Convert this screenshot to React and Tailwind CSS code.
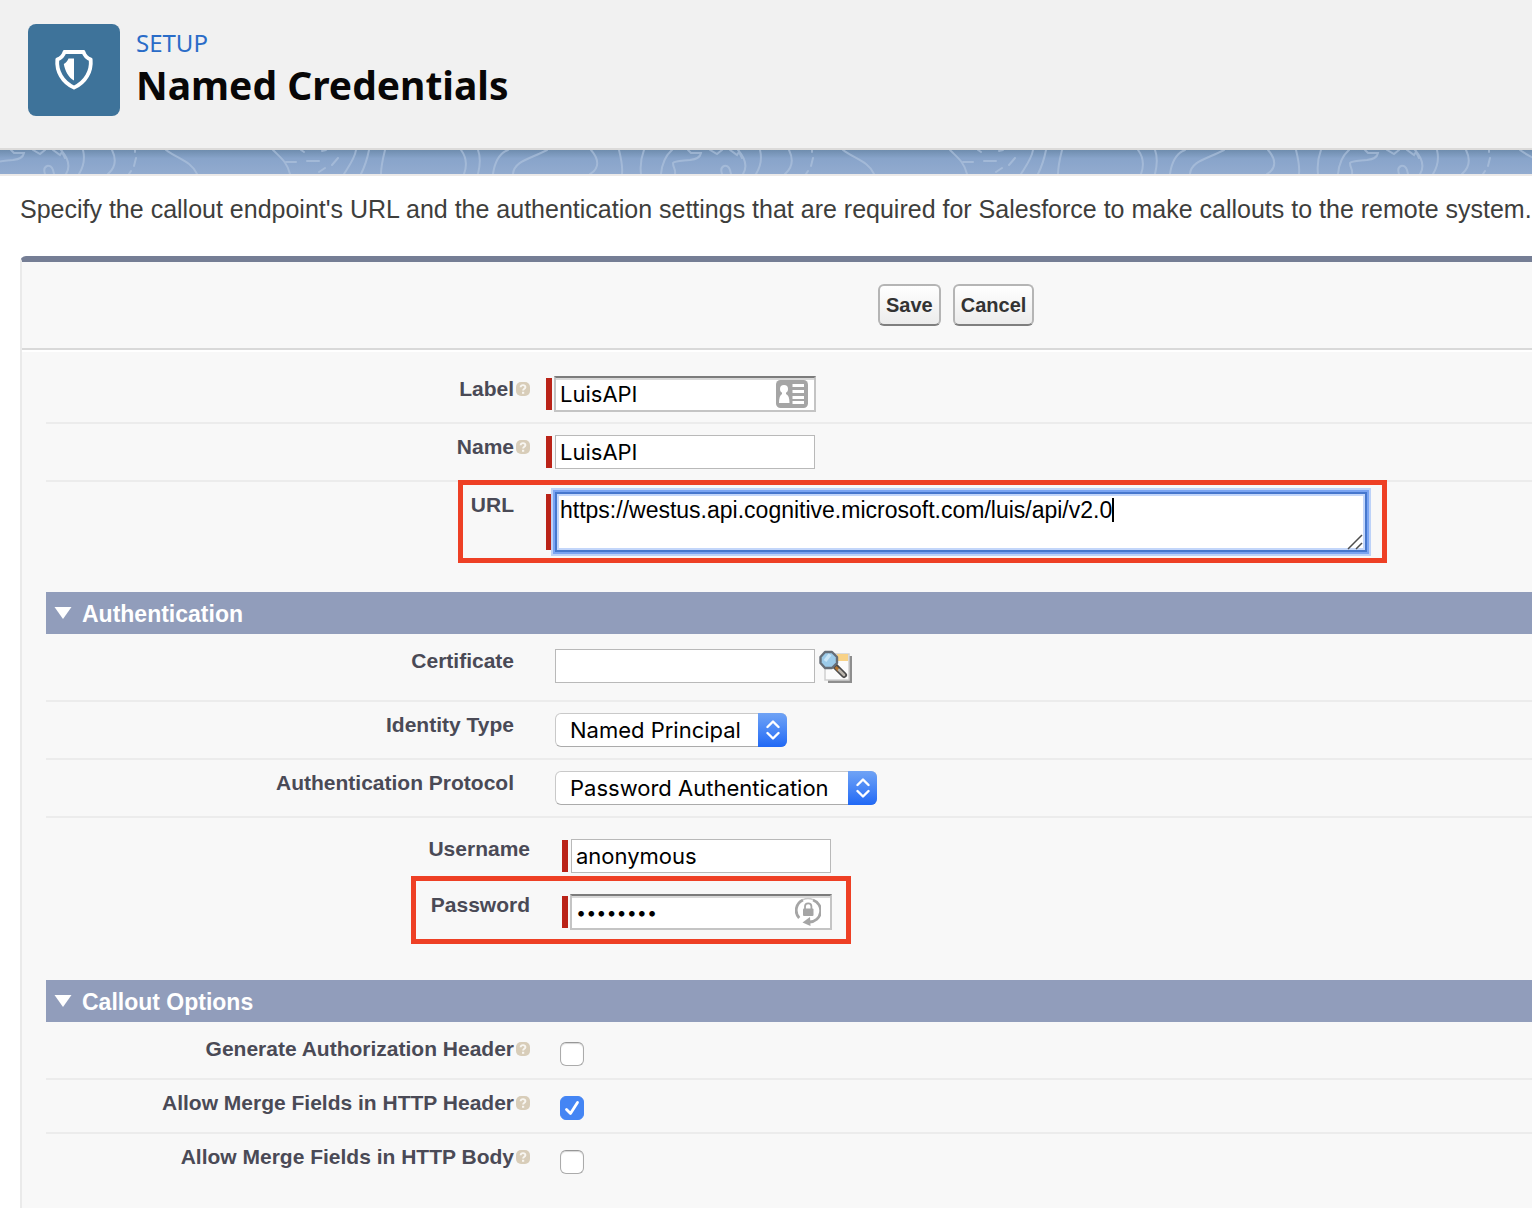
import React, { useState } from "react";

const SANS = "font-['Liberation_Sans',Arial,sans-serif]";
const UI = "font-['Inter','Liberation_Sans',sans-serif]";

function ShieldIcon() {
  return (
    <svg viewBox="0 0 40 42" className="h-[42px] w-10" aria-hidden="true">
      <path
        d="M10.5 3H29.5C30.5 6.500 33 9 36.700 10.600C37.700 22 32 33 20 38.600C8 33 2.300 22 3.300 10.600C7 9 9.500 6.500 10.500 3Z"
        fill="none"
        stroke="#fff"
        strokeWidth="3.8"
        strokeLinejoin="round"
      />
      <path d="M20 9.500H14.500C13.500 12 12 13.700 9.800 15C11 22 14.500 28.500 20 31.500Z" fill="#fff" />
    </svg>
  );
}

const CONTOURS = [
  "M-7 24C-5 10 0 3 8 0",
  "M13 24C14 11 30 9 47 0",
  "M91 0C99 9 100 18 90 24",
  "M119 0C121 8 123 16 122 24",
  "M144 0C141 8 140 16 141 24",
  "M172 0C165 6 162 14 161 24",
  "M188 0L191 3L201 3C200 8 196 9 190 10C180 11 174 11 173 13C173 18 176 19 175 24",
  "M210 0L217 4L222 0",
  "M230 0L237 5L239 2L242 8",
  "M238 0C245 8 248 16 243 24",
  "M222 24C219 15 228 13 230 20L231 24",
  "M260 0C262 8 261 16 256 24",
  "M289 0C293 8 293 17 285 24",
  "M312 0V2M313 8L311 16M308 21L306 24",
  "M343 0C355 9 368 11 374 24",
  "M450 0C458 8 464 12 467 24",
  "M463 12H473M484 11H496M509 15L515 8M496 22L502 18M478 0L481 2M499 1L503 0",
  "M533 0C532 8 526 16 521 24",
  "M546 0C544 10 542 16 538 24",
  "M562 0C560 8 558 16 558 24",
  "M638 0C644 8 644 16 641 24",
  "M655 0C658 8 657 16 655 24",
];

function ContourBand() {
  return (
    <div className="h-6 overflow-hidden bg-linear-to-b from-[#6f8dae] via-[#88a4ca] via-35% to-[#92abcf]">
      <svg width="3200" height="24" className="block max-w-none" aria-hidden="true">
        <g fill="none" stroke="#b4c7e0" strokeWidth="2" strokeLinecap="round" opacity="0.6">
          {[-177, 500, 1177, 1854, 2531].map((x) => (
            <g key={x} transform={`translate(${x} 0)`}>
              {CONTOURS.map((d) => (
                <path key={d} d={d} />
              ))}
            </g>
          ))}
        </g>
      </svg>
    </div>
  );
}

function HelpIcon() {
  return (
    <svg viewBox="0 0 14 14" className="h-3.5 w-3.5" aria-hidden="true">
      <rect width="14" height="14" rx="5" fill="#d8cdb9" />
      <path d="M4.600 5.200C4.800 2.400 9.600 2.500 9.400 5.200C9.300 6.700 7.200 6.800 7.100 8.500" fill="none" stroke="#f8f6f1" strokeWidth="1.900" />
      <rect x="6" y="9.800" width="2.200" height="2" fill="#f8f6f1" />
    </svg>
  );
}

function ContactCardIcon() {
  return (
    <svg viewBox="0 0 32 28" className="h-7 w-8" aria-hidden="true">
      <rect width="32" height="28" rx="4.500" fill="#a5a5a5" />
      <circle cx="8" cy="9" r="4" fill="#fff" />
      <path d="M6 11H10V14C12.500 15 13.500 18 13.500 23H3C3 18 4 15 6 14Z" fill="#fff" />
      <path d="M16.500 5.500H28M16.500 11.500H28M16.500 17.500H28M16.500 22.500H28" stroke="#fff" strokeWidth="2.800" />
    </svg>
  );
}

function LockCycleIcon() {
  return (
    <svg viewBox="0 0 26 30" className="h-[30px] w-[26px]" aria-hidden="true">
      <path d="M4.200 21A11.300 11.300 0 0 1 8 3M18 3A11.300 11.300 0 0 1 14.500 25" fill="none" stroke="#a5a5a5" strokeWidth="2.800" />
      <path d="M8 2.600C11 1.300 15 1.300 18 2.600" fill="none" stroke="#c8c8c8" strokeWidth="1.500" />
      <path d="M15 20L15.500 29L7.500 25.500Z" fill="#a5a5a5" />
      <rect x="8" y="11.500" width="10.500" height="7.500" rx="1" fill="#a5a5a5" />
      <path d="M10 12V9.500A3.200 3.200 0 0 1 16.400 9.500V12" fill="none" stroke="#a5a5a5" strokeWidth="1.800" />
    </svg>
  );
}

function LookupIcon() {
  return (
    <svg viewBox="0 0 34 34" className="h-[34px] w-[34px]" aria-hidden="true">
      <path d="M9 6H33V33H9Z" fill="#8e8e8e" />
      <path d="M6 4H30V30H6Z" fill="#fbfbfb" stroke="#cfcfcf" strokeWidth="1.500" />
      <rect x="18" y="4" width="11" height="7" fill="#f8d287" />
      <path d="M16 16L25 25" stroke="#4a4a4a" strokeWidth="6" strokeLinecap="round" />
      <path d="M16.500 17L20 20.500" stroke="#b5742e" strokeWidth="3" />
      <path d="M20 20L25 25" stroke="#b9b4ac" strokeWidth="2.600" strokeLinecap="round" />
      <path d="M6 2H13L18 7V13L13 18H6L1.500 13V7Z" fill="#9ccbea" stroke="#666e78" strokeWidth="2.400" strokeLinejoin="round" />
      <path d="M6 11L11 4.500" stroke="#c9e5f7" strokeWidth="3.500" />
    </svg>
  );
}

function Label({ htmlFor, help, nested, children }) {
  return (
    <div className="flex w-[484px] shrink-0 items-center justify-end gap-0.5">
      <label
        htmlFor={htmlFor}
        className={
          nested
            ? "text-[21px] leading-[22px] font-bold whitespace-nowrap text-[#4a4a56]"
            : "text-[21px] leading-[26px] font-bold whitespace-nowrap text-[#4a4a56]"
        }
      >
        {children}
      </label>
      <span className="flex w-3.5">{help && <HelpIcon />}</span>
    </div>
  );
}

function Required() {
  return <span className="h-8 w-1.5 bg-[#ba2318]" />;
}

function TextInput({ id, type = "text", value, inset, icon }) {
  const [text, setText] = useState(value);
  const size = type === "password" ? "text-lg" : "text-[22px]";
  return (
    <div className="relative flex h-9 w-[262px] items-center justify-center">
      <input
        id={id}
        type={type}
        value={text}
        onChange={(e) => setText(e.target.value)}
        className={
          inset
            ? `${UI} ${size} h-9 w-[262px] border-2 border-[#c4c4c4] border-t-[#7c7c7c] bg-white pl-1 text-black shadow-[inset_0_2px_0_#d9d9d9] outline-none`
            : `${UI} ${size} h-[34px] w-[260px] border border-[#b9b9b9] bg-white pl-1 text-black outline-none`
        }
      />
      {icon}
    </div>
  );
}

function Select({ id, label, className }) {
  return (
    <div className={`relative mx-px h-[34px] ${className}`}>
      <select
        id={id}
        className={`${UI} h-full w-full appearance-none rounded-md border border-[#c9c9c9] border-b-[#ababab] bg-white pl-3.5 text-[22px] text-black outline-none`}
      >
        <option>{label}</option>
      </select>
      <span className="pointer-events-none absolute inset-y-0 right-0 flex w-[29px] items-center justify-center rounded-r-md bg-linear-to-b from-[#70a3f5] to-[#2068f5]">
        <svg viewBox="0 0 14 20" className="h-5 w-3.5" fill="none" stroke="#fff" strokeWidth="2.400" strokeLinecap="round" strokeLinejoin="round" aria-hidden="true">
          <path d="M1.500 7L7 1.500L12.500 7M1.500 13L7 18.500L12.500 13" />
        </svg>
      </span>
    </div>
  );
}

function Row({ className = "pt-2.5 pb-2.5", last, children }) {
  return (
    <div className={`flex items-start gap-4 ${last ? "" : "border-b-2 border-[#ececec]"} ${className}`}>
      {children}
    </div>
  );
}

function SectionHeading({ children }) {
  return (
    <h2 className="flex h-[42px] items-center gap-2.5 bg-[#919dbb] pl-2 text-[23px] font-bold text-white">
      <svg viewBox="0 0 18 14" className="h-3.5 w-[18px]" aria-hidden="true">
        <path d="M0.500 1H17.500L9 13Z" fill="#fff" />
      </svg>
      <span className="pt-0.5 leading-7">{children}</span>
    </h2>
  );
}

function CheckRow({ id, label, defaultChecked, className, last }) {
  return (
    <Row className={className} last={last}>
      <Label htmlFor={id} help>{label}</Label>
      <span className="relative mt-1.5 ml-3.5 h-6 w-6">
        <input
          id={id}
          type="checkbox"
          defaultChecked={defaultChecked}
          className="peer block h-6 w-6 appearance-none rounded-md border border-[#ababab] border-t-[#979797] bg-white shadow-[inset_0_1px_1px_#d6d6d6] checked:border-[#4485f4] checked:bg-[#4485f4] checked:shadow-none"
        />
        <svg viewBox="0 0 24 24" className="pointer-events-none absolute inset-0 hidden h-6 w-6 peer-checked:block" fill="none" stroke="#fff" strokeWidth="2.800" strokeLinecap="round" strokeLinejoin="round" aria-hidden="true">
          <path d="M6.500 13.500L10.500 17.500L17.500 6.500" />
        </svg>
      </span>
    </Row>
  );
}

export default function App() {
  const [url, setUrl] = useState("https://westus.api.cognitive.microsoft.com/luis/api/v2.0");
  return (
    <div className={`${SANS} flex min-h-screen flex-col overflow-hidden bg-white`}>
      <header className="flex h-[150px] items-start gap-4 border-b-2 border-[#dcdbda] bg-[#f1f1f1] pt-6 pl-7 font-['Noto_Sans','Open_Sans',sans-serif]">
        <div className="flex h-[92px] w-[92px] items-center justify-center rounded-lg bg-[#3e739a]">
          <ShieldIcon />
        </div>
        <div className="pt-1">
          <p className="text-2xl leading-[30px] text-[#2a6cc8]">SETUP</p>
          <h1 className="text-[39px] leading-[54px] font-bold text-[#080707]">Named Credentials</h1>
        </div>
      </header>
      <ContourBand />

      <main className="flex flex-1 flex-col border-t-2 border-[#ebe9e8] pl-5">
        <p className="pt-[18px] text-[25px] leading-[30px] whitespace-nowrap text-[#3e3e3c]">
          Specify the callout endpoint's URL and the authentication settings that are required for Salesforce to make callouts to the remote system.
        </p>

        <form onSubmit={(e) => e.preventDefault()} className="mt-8 flex-1 rounded-tl-md border-t-6 border-l-2 border-t-[#757e95] border-l-[#eaeaea] bg-[#f8f8f8]">
          <div className="flex h-[88px] gap-3 border-b-2 border-[#d9d9d9] pt-[22px] pl-[856px]">
            {["Save", "Cancel"].map((name) => (
              <button
                key={name}
                type="button"
                className="h-[42px] rounded-md border-2 border-[#b5b5b5] border-b-[#7f7f7f] bg-linear-to-b from-white to-[#ececec] px-1.5 text-xl font-bold text-[#333333]"
              >
                {name}
              </button>
            ))}
          </div>

          <div className="border-t-2 border-white pl-6">
            <Row className="pt-6 pb-2.5">
              <Label htmlFor="label" help>Label</Label>
              <div className="flex items-center gap-0.5">
                <Required />
                <TextInput
                  id="label"
                  value="LuisAPI"
                  inset
                  icon={<span className="absolute top-1 right-2"><ContactCardIcon /></span>}
                />
              </div>
            </Row>
            <Row>
              <Label htmlFor="name" help>Name</Label>
              <div className="flex items-center gap-0.5">
                <Required />
                <TextInput id="name" value="LuisAPI" />
              </div>
            </Row>
            <div className="relative">
              <Row className="pt-2.5 pb-10" last>
                <Label htmlFor="url">URL</Label>
                <div className="relative flex items-center gap-[3px]">
                  <span className="h-14 w-1.5 bg-[#ba2318]" />
                  <textarea
                    id="url"
                    value={url}
                    onChange={(e) => setUrl(e.target.value)}
                    className="block h-[60px] w-[812px] resize-none overflow-hidden border-2 border-[#4677cd] bg-white px-[3px] py-0.5 text-[23px] leading-7 text-black shadow-[0_0_0_2px_#7aa4f2,0_0_0_4px_#bdd2f8,inset_0_0_0_2px_#c3d6fa] outline-none"
                  />
                  <span className="absolute top-1.5 left-[566px] h-6 w-0.5 bg-black" />
                  <svg viewBox="0 0 16 16" className="absolute right-1 bottom-0.5 h-4 w-4" stroke="#4d4d4d" strokeWidth="1.500" aria-hidden="true">
                    <path d="M1 15L15 1M9 15L15 9" />
                  </svg>
                </div>
              </Row>
              <div className="pointer-events-none absolute -top-0.5 left-[412px] h-[83px] w-[929px] border-5 border-[#ee4025]" />
            </div>

            <SectionHeading>Authentication</SectionHeading>
            <Row className="pt-3.5 pb-4">
              <Label htmlFor="certificate">Certificate</Label>
              <div className="flex items-center gap-[3px] pl-2">
                <TextInput id="certificate" value="" />
                <button type="button" aria-label="Certificate lookup" className="pt-0.5">
                  <LookupIcon />
                </button>
              </div>
            </Row>
            <Row>
              <Label htmlFor="identity">Identity Type</Label>
              <div className="flex h-9 items-center pl-2">
                <Select id="identity" label="Named Principal" className="w-[232px]" />
              </div>
            </Row>
            <Row>
              <Label htmlFor="protocol">Authentication Protocol</Label>
              <div className="flex h-9 items-center pl-2">
                <Select id="protocol" label="Password Authentication" className="w-[322px]" />
              </div>
            </Row>
            <Row className="pt-5 pl-4" last>
              <Label htmlFor="username" nested>Username</Label>
              <div className="flex items-center gap-0.5">
                <Required />
                <TextInput id="username" value="anonymous" />
              </div>
            </Row>
            <div className="relative">
              <Row className="pt-5 pb-[50px] pl-4" last>
                <Label htmlFor="password" nested>Password</Label>
                <div className="flex items-center gap-0.5">
                  <Required />
                  <TextInput
                    id="password"
                    type="password"
                    value="password"
                    inset
                    icon={<span className="absolute top-[3px] right-[11px]"><LockCycleIcon /></span>}
                  />
                </div>
              </Row>
              <div className="pointer-events-none absolute top-0.5 left-[365px] h-[68px] w-[440px] border-5 border-[#ee4025]" />
            </div>

            <SectionHeading>Callout Options</SectionHeading>
            <CheckRow id="auth-header" label="Generate Authorization Header" className="pt-3.5 pb-3" />
            <CheckRow id="merge-header" label="Allow Merge Fields in HTTP Header" defaultChecked className="pt-2.5 pb-3" />
            <CheckRow id="merge-body" label="Allow Merge Fields in HTTP Body" className="pt-2.5 pb-[34px]" last />
          </div>
        </form>
      </main>
    </div>
  );
}
